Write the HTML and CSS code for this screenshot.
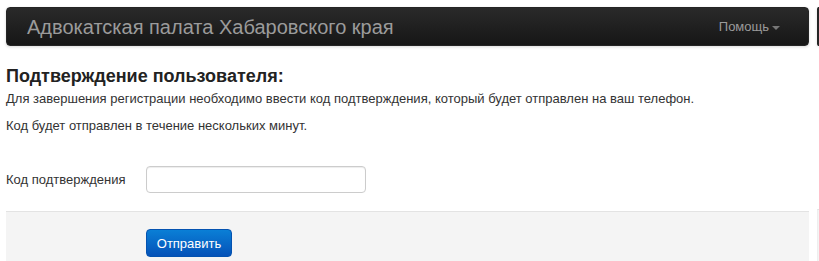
FILE: index.html
```html
<!DOCTYPE html>
<html lang="ru">
<head>
<meta charset="UTF-8" />
<title>Подтверждение пользователя</title>
<link rel="stylesheet" href="styles.css">
</head>
<body>
<div class="page">
<div class="column">
<div class="navbar">
<a class="brand" href="#">Адвокатская палата Хабаровского края</a>
<a class="help" href="#">Помощь <b class="caret"></b></a>
</div>

<h3>Подтверждение пользователя:</h3>
<p class="lead-text">Для завершения регистрации необходимо ввести код подтверждения, который будет отправлен на ваш телефон.</p>
<p>Код будет отправлен в течение нескольких минут.</p>

<form class="form-horizontal">
<div class="control-group">
<label class="control-label" for="code">Код подтверждения</label>
<input type="text" id="code" class="code-input">
</div>
<div class="form-actions">
<button type="button" class="btn-primary">Отправить</button>
</div>
</form>
</div>

<div class="column-next">
<div class="navbar"></div>
<div class="spacer"></div>
<div class="form-actions"></div>
</div>
</div>
</body>
</html>
```

FILE: styles.css
```css
* {
margin: 0;
padding: 0;
box-sizing: border-box;
}

body {
font-family: "Liberation Sans", Arial, sans-serif;
font-size: 13px;
line-height: 20px;
color: #333;
background: #fff;
overflow: hidden;
}

.page {
display: flex;
gap: 8px;
padding: 7px 0 0 6px;
height: 261px;
}

.column {
width: 803px;
flex-shrink: 0;
display: flex;
flex-direction: column;
}

.navbar {
height: 39px;
display: flex;
align-items: center;
justify-content: space-between;
background: linear-gradient(to bottom, #2a2a2a, #161616);
border: 1px solid #252525;
border-radius: 4px;
box-shadow: 0 1px 3px rgba(0, 0, 0, 0.15);
padding: 0 28px 0 20px;
flex-shrink: 0;
}

.brand {
color: #9b9b9b;
font-size: 20px;
text-decoration: none;
}

.help {
color: #9b9b9b;
font-size: 13px;
text-decoration: none;
display: flex;
align-items: center;
gap: 3px;
}

.caret {
width: 0;
height: 0;
border-top: 4px solid #777;
border-left: 4px solid transparent;
border-right: 4px solid transparent;
margin-top: 2px;
}

h3 {
font-size: 18px;
font-weight: bold;
color: #222;
line-height: 22px;
margin-top: 19px;
}

.lead-text {
margin-top: 2px;
margin-bottom: 7px;
}

.form-horizontal {
margin-top: 30px;
flex: 1;
display: flex;
flex-direction: column;
}

.control-group {
display: flex;
align-items: center;
}

.control-label {
width: 140px;
}

.code-input {
width: 220px;
height: 27px;
border: 1px solid #ccc;
border-radius: 4px;
box-shadow: inset 0 1px 1px rgba(0, 0, 0, 0.075);
font: inherit;
padding: 4px 6px;
}

.form-actions {
margin-top: 18px;
flex: 1;
background: #f4f4f4;
border-top: 1px solid #e3e3e3;
padding: 17px 0 0 140px;
}

.btn-primary {
width: 86px;
height: 28px;
color: #fff;
font-family: inherit;
font-size: 13px;
background: linear-gradient(to bottom, #0a7fd6, #0552b8);
border: 1px solid #0452b0;
border-radius: 4px;
cursor: pointer;
}

.column-next {
flex: 1;
min-width: 0;
display: flex;
flex-direction: column;
}

.column-next .navbar {
padding: 0;
border-radius: 4px 0 0 4px;
}

.column-next .spacer {
height: 145px;
}

.column-next .form-actions {
margin-top: 18px;
padding: 0;
border-left: 1px solid #eee;
}
```
